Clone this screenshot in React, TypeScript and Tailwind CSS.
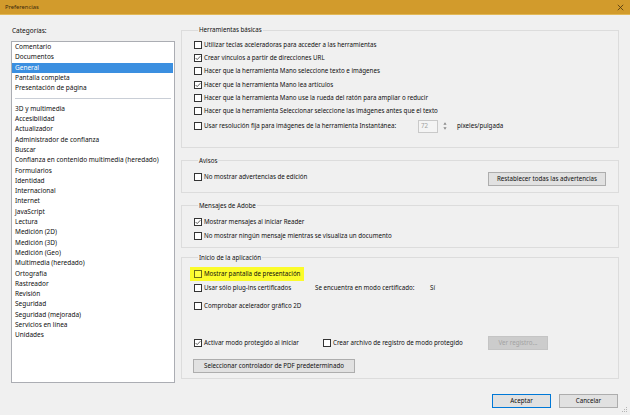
import React from "react";

function Box({ checked = false, yellow = false }: { checked?: boolean; yellow?: boolean }) {
  return (
    <span
      className={
        yellow
          ? "inline-flex w-[8px] h-[8px] border border-[#6b6b1a] bg-[#ffff40] shrink-0 items-center justify-center"
          : "inline-flex w-[8px] h-[8px] border border-[#333333] bg-white shrink-0 items-center justify-center"
      }
    >
      {checked && (
        <svg width="6" height="6" viewBox="0 0 6 6">
          <polyline points="0.6,3 2.2,4.6 5.4,1.2" fill="none" stroke="#333" strokeWidth="0.8" />
        </svg>
      )}
    </span>
  );
}

function Row({ checked = false, children, h = "h-[13.2px]" }: { checked?: boolean; children: React.ReactNode; h?: string }) {
  return (
    <div className={`flex items-center gap-[2px] ${h}`}>
      <Box checked={checked} />
      <span className="whitespace-nowrap">{children}</span>
    </div>
  );
}

function Btn({ children, className = "", disabled = false }: { children: React.ReactNode; className?: string; disabled?: boolean }) {
  return (
    <div
      className={
        disabled
          ? `flex items-center justify-center h-[14px] border border-[#c4c4c4] bg-[#cccccc] text-[#a3a3a3] ${className}`
          : `flex items-center justify-center h-[14px] border border-[#adadad] bg-[#e1e1e1] ${className}`
      }
    >
      {children}
    </div>
  );
}

const cats1 = ["Comentario", "Documentos", "General", "Pantalla completa", "Presentación de página"];
const cats2 = [
  "3D y multimedia",
  "Accesibilidad",
  "Actualizador",
  "Administrador de confianza",
  "Buscar",
  "Confianza en contenido multimedia (heredado)",
  "Formularios",
  "Identidad",
  "Internacional",
  "Internet",
  "JavaScript",
  "Lectura",
  "Medición (2D)",
  "Medición (3D)",
  "Medición (Geo)",
  "Multimedia (heredado)",
  "Ortografía",
  "Rastreador",
  "Revisión",
  "Seguridad",
  "Seguridad (mejorada)",
  "Servicios en línea",
  "Unidades",
];

export default function App() {
  return (
    <div
      className="relative w-[630px] h-[415px] bg-[#f0f0f0] flex flex-col text-[#0f0f0f] text-[6.2px] leading-[10px] overflow-hidden"
      style={{ fontFamily: '"Noto Sans", "Open Sans", sans-serif' }}
    >
      {/* title bar */}
      <div className="h-[15px] shrink-0 bg-[#d29b2c] border-b border-[#e2b857] flex items-center justify-between pl-[5px] pr-[6px]">
        <span className="text-[5.8px] text-[#3c2a0c]">Preferencias</span>
        <svg width="7" height="7" viewBox="0 0 7 7">
          <path d="M0.8 0.8 L6.2 6.2 M6.2 0.8 L0.8 6.2" stroke="#4a3410" strokeWidth="0.8" />
        </svg>
      </div>

      <div className="flex flex-1 px-[11px] gap-[6px]">
        {/* left column */}
        <div className="w-[164px] shrink-0 pt-[11px] flex flex-col">
          <div className="text-[6.5px] leading-[10px] pl-[1px]">Categorías:</div>
          <div className="mt-[5px] h-[342px] border border-[#abadb3] bg-white text-[6.5px] leading-[10.3px]">
            {cats1.map((c) => (
              <div
                key={c}
                className={c === "General" ? "pl-[3px] bg-[#3b8fe0] text-white mr-[1px]" : "pl-[3px]"}
              >
                {c}
              </div>
            ))}
            <div className="h-[10.3px] flex items-center px-[3px]">
              <div className="h-[1px] w-full bg-[#c9ced6]" />
            </div>
            {cats2.map((c) => (
              <div key={c} className="pl-[3px] whitespace-nowrap">
                {c}
              </div>
            ))}
          </div>
        </div>

        {/* right column */}
        <div className="flex-1 pt-[10px] flex flex-col">
          <fieldset className="border border-[#dcdcdc] pl-[12px] pt-[3.5px] pb-[12px] flex flex-col">
            <legend className="ml-[4px] px-[1px] leading-[10px]">Herramientas básicas</legend>
            <Row>Utilizar teclas aceleradoras para acceder a las herramientas</Row>
            <Row checked>Crear vínculos a partir de direcciones URL</Row>
            <Row>Hacer que la herramienta Mano seleccione texto e imágenes</Row>
            <Row checked>Hacer que la herramienta Mano lea artículos</Row>
            <Row>Hacer que la herramienta Mano use la rueda del ratón para ampliar o reducir</Row>
            <Row>Hacer que la herramienta Seleccionar seleccione las imágenes antes que el texto</Row>
            <div className="flex items-center gap-[2px] h-[17px]">
              <Box />
              <span className="whitespace-nowrap w-[212px]">Usar resolución fija para imágenes de la herramienta Instantánea:</span>
              <div className="w-[20px] h-[13px] border border-[#c9c9c9] bg-[#f4f4f4] text-[#a0a0a0] pl-[2px] flex items-center">72</div>
              <div className="ml-[3px] flex flex-col gap-[2px] items-center">
                <svg width="4" height="3" viewBox="0 0 4 3">
                  <path d="M2 0.3 L3.6 2.7 L0.4 2.7 Z" fill="#8a8a8a" />
                </svg>
                <svg width="4" height="3" viewBox="0 0 4 3">
                  <path d="M2 2.7 L3.6 0.3 L0.4 0.3 Z" fill="#8a8a8a" />
                </svg>
              </div>
              <span className="ml-[8px] whitespace-nowrap">píxeles/pulgada</span>
            </div>
          </fieldset>

          <fieldset className="mt-[8px] border border-[#dcdcdc] pl-[12px] pr-[12px] pt-[6px] pb-[6px]">
            <legend className="ml-[4px] px-[1px] leading-[10px]">Avisos</legend>
            <div className="flex items-center justify-between h-[14px]">
              <div className="flex items-center gap-[2px] -mt-[3px]">
                <Box />
                <span>No mostrar advertencias de edición</span>
              </div>
              <Btn className="w-[118px]">Restablecer todas las advertencias</Btn>
            </div>
          </fieldset>

          <fieldset className="mt-[8px] border border-[#dcdcdc] pl-[12px] pt-[4px] pb-[4px] flex flex-col">
            <legend className="ml-[4px] px-[1px] leading-[10px]">Mensajes de Adobe</legend>
            <Row checked h="h-[14px]">Mostrar mensajes al iniciar Reader</Row>
            <Row h="h-[14px]">No mostrar ningún mensaje mientras se visualiza un documento</Row>
          </fieldset>

          <fieldset className="mt-[5px] border border-[#dcdcdc] pl-[12px] pt-[4px] pb-[5px] flex flex-col">
            <legend className="ml-[4px] px-[1px] leading-[10px]">Inicio de la aplicación</legend>
            <div className="flex h-[14px]">
              <div className="-ml-[4px] pl-[4px] pr-[4px] bg-[#fbfb2a] flex items-center gap-[2px] h-[14px]">
                <Box yellow />
                <span className="whitespace-nowrap">Mostrar pantalla de presentación</span>
              </div>
            </div>
            <div className="flex items-center gap-[2px] h-[14px]">
              <Box />
              <span className="whitespace-nowrap w-[109px]">Usar sólo plug-ins certificados</span>
              <span className="whitespace-nowrap w-[113px]">Se encuentra en modo certificado:</span>
              <span>Sí</span>
            </div>
            <div className="mt-[4px]">
              <Row h="h-[14px]">Comprobar acelerador gráfico 2D</Row>
            </div>
            <div className="mt-[23px] flex items-center h-[14px]">
              <div className="w-[129px] flex items-center gap-[2px]">
                <Box checked />
                <span className="whitespace-nowrap">Activar modo protegido al iniciar</span>
              </div>
              <div className="w-[165px] flex items-center gap-[2px]">
                <Box />
                <span className="whitespace-nowrap">Crear archivo de registro de modo protegido</span>
              </div>
              <Btn disabled className="w-[60px]">Ver registro...</Btn>
            </div>
            <div className="mt-[9px] flex">
              <Btn className="w-[162px] -ml-[1px]">Seleccionar controlador de PDF predeterminado</Btn>
            </div>
          </fieldset>

          <div className="flex justify-end gap-[8px] pt-[15px] pr-[1px]">
            <Btn className="w-[59px] !border-[#0078d7]">Aceptar</Btn>
            <Btn className="w-[59px]">Cancelar</Btn>
          </div>
        </div>
      </div>

      <svg className="absolute right-[2px] bottom-[2px]" width="6" height="6" viewBox="0 0 6 6">
        <rect x="4" y="0" width="1" height="1" fill="#b5b5b5" />
        <rect x="2" y="2" width="1" height="1" fill="#b5b5b5" />
        <rect x="4" y="2" width="1" height="1" fill="#b5b5b5" />
        <rect x="0" y="4" width="1" height="1" fill="#b5b5b5" />
        <rect x="2" y="4" width="1" height="1" fill="#b5b5b5" />
        <rect x="4" y="4" width="1" height="1" fill="#b5b5b5" />
      </svg>
    </div>
  );
}
